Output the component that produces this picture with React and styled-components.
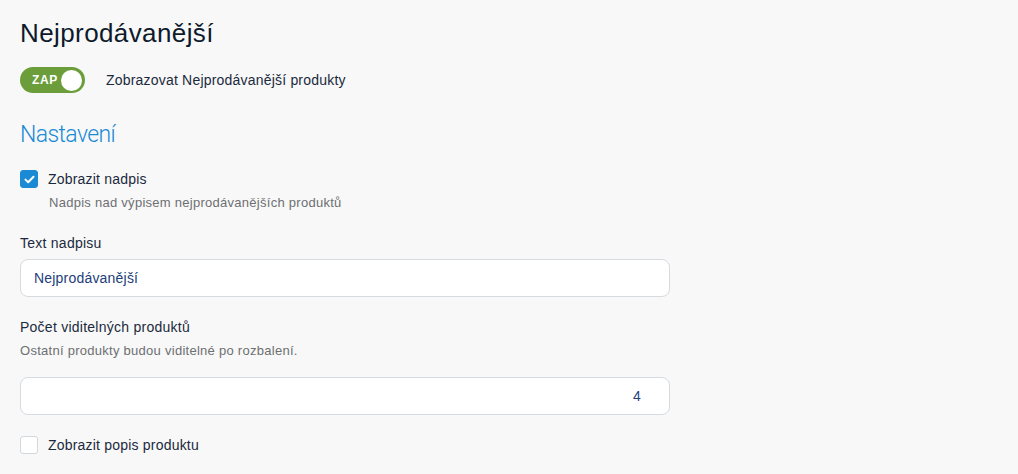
import React, { useState } from "react";
import styled, { createGlobalStyle } from "styled-components";

const GlobalStyle = createGlobalStyle`
  html, body {
    margin: 0;
    padding: 0;
    background: #f8f8f8;
    font-family: "Liberation Sans", Arial, sans-serif;
    color: #1b2a3d;
  }
`;

const Page = styled.div`
  padding: 17px 20px 20px 20px;
  width: 650px;
`;

const Title = styled.h1`
  margin: 0;
  font-size: 26px;
  font-weight: 400;
  line-height: 32px;
  letter-spacing: 0.4px;
  color: #0e1a2c;
`;

const ToggleRow = styled.label`
  display: flex;
  align-items: center;
  gap: 21px;
  margin-top: 18px;
  font-size: 14px;
  letter-spacing: 0.2px;
  color: #1b2a3d;
  cursor: pointer;
`;

const Switch = styled.span`
  position: relative;
  display: inline-flex;
  align-items: center;
  width: 65px;
  height: 26px;
  border-radius: 13px;
  box-sizing: border-box;
  padding-left: 12px;
  background: ${(p) => (p.$on ? "#6b9e3a" : "#b9c0c7")};
  color: #fff;
  font-size: 12px;
  font-weight: 700;
  letter-spacing: 0.6px;
`;

const Knob = styled.span`
  position: absolute;
  top: 2.5px;
  right: 3px;
  width: 21px;
  height: 21px;
  border-radius: 50%;
  background: #fff;
`;

const Section = styled.h2`
  margin: 27px 0 0 0;
  font-family: Roboto, "Liberation Sans", sans-serif;
  font-size: 23px;
  font-weight: 300;
  line-height: 30px;
  color: #1a8ad4;
  letter-spacing: -0.6px;
`;

const CheckRow = styled.label`
  display: flex;
  align-items: center;
  gap: 10px;
  margin-top: ${(p) => p.$mt || 0}px;
  font-size: 14px;
  letter-spacing: 0.2px;
  color: #1b2a3d;
  cursor: pointer;
`;

const Box = styled.span`
  display: inline-flex;
  align-items: center;
  justify-content: center;
  width: 18px;
  height: 18px;
  box-sizing: border-box;
  border-radius: 3px;
  background: ${(p) => (p.$checked ? "#1a8ad4" : "#fff")};
  border: 1px solid ${(p) => (p.$checked ? "#1a8ad4" : "#d3d8dd")};
`;

const Help = styled.div`
  font-size: 13px;
  letter-spacing: 0.27px;
  color: #6d6f72;
  line-height: 18px;
  margin-top: ${(p) => p.$mt || 0}px;
  padding-left: ${(p) => p.$indent || 0}px;
`;

const Label = styled.div`
  font-size: 14px;
  letter-spacing: 0.25px;
  line-height: 18px;
  color: #1b2a3d;
  margin-top: ${(p) => p.$mt || 0}px;
`;

const Input = styled.input`
  display: block;
  width: 100%;
  height: 38px;
  box-sizing: border-box;
  margin-top: ${(p) => p.$mt || 0}px;
  padding: 0 ${(p) => (p.$right ? 28 : 13)}px 0 13px;
  border: 1px solid #d6dbe0;
  border-radius: 8px;
  background: #fff;
  font-family: "Liberation Sans", Arial, sans-serif;
  font-size: 14px;
  letter-spacing: 0.2px;
  color: #23407a;
  text-align: ${(p) => (p.$right ? "right" : "left")};
  outline: none;
`;

const Check = () => (
  <svg width="11" height="9" viewBox="0 0 11 9" fill="none">
    <path d="M1.5 4.6 L4.2 7.2 L9.5 1.8" stroke="#fff" strokeWidth="2" strokeLinecap="round" strokeLinejoin="round" />
  </svg>
);

export default function App() {
  const [on, setOn] = useState(true);
  const [showTitle, setShowTitle] = useState(true);
  const [showDesc, setShowDesc] = useState(false);
  const [title, setTitle] = useState("Nejprodávanější");
  const [count, setCount] = useState("4");

  return (
    <>
      <GlobalStyle />
      <Page>
        <Title>Nejprodávanější</Title>
        <ToggleRow onClick={() => setOn(!on)}>
          <Switch $on={on}>
            {on ? "ZAP" : "VYP"}
            <Knob />
          </Switch>
          Zobrazovat Nejprodávanější produkty
        </ToggleRow>

        <Section>Nastavení</Section>

        <CheckRow $mt={20} onClick={() => setShowTitle(!showTitle)}>
          <Box $checked={showTitle}>{showTitle && <Check />}</Box>
          Zobrazit nadpis
        </CheckRow>
        <Help $mt={6} $indent={29}>Nadpis nad výpisem nejprodávanějších produktů</Help>

        <Label $mt={22}>Text nadpisu</Label>
        <Input $mt={7} value={title} onChange={(e) => setTitle(e.target.value)} />

        <Label $mt={21}>Počet viditelných produktů</Label>
        <Help $mt={6}>Ostatní produkty budou viditelné po rozbalení.</Help>
        <Input $mt={17} $right value={count} onChange={(e) => setCount(e.target.value)} />

        <CheckRow $mt={21} onClick={() => setShowDesc(!showDesc)}>
          <Box $checked={showDesc}>{showDesc && <Check />}</Box>
          Zobrazit popis produktu
        </CheckRow>
      </Page>
    </>
  );
}
